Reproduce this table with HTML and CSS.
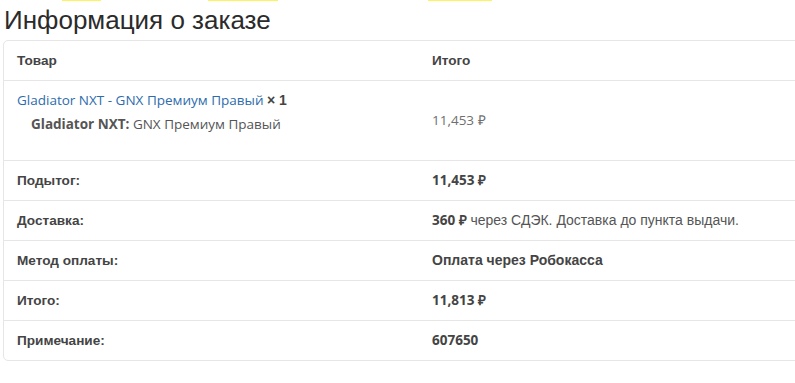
FILE: index.html
```html
<!DOCTYPE html>
<html lang="ru">
<head>
<meta charset="utf-8">
<title>Информация о заказе</title>
<link rel="stylesheet" href="styles.css">
</head>
<body>
<div class="marks">
  <span class="mark m1"></span>
  <span class="mark m2"></span>
  <span class="mark m3"></span>
</div>
<h2 class="title">Информация о заказе</h2>
<table class="order">
  <thead>
    <tr>
      <th class="c1">Товар</th>
      <th class="c2">Итого</th>
    </tr>
  </thead>
  <tbody>
    <tr class="item">
      <td class="c1 item-name">
        <a class="link" href="#">Gladiator NXT - GNX Премиум Правый</a> <strong class="qty">× 1</strong>
        <div class="meta"><strong>Gladiator NXT:</strong> GNX Премиум Правый</div>
      </td>
      <td class="c2 item-total"><span class="amount">11,453&nbsp;₽</span></td>
    </tr>
  </tbody>
  <tfoot>
    <tr>
      <th class="c1">Подытог:</th>
      <td class="c2"><span class="amount b">11,453&nbsp;₽</span></td>
    </tr>
    <tr>
      <th class="c1">Доставка:</th>
      <td class="c2"><span class="amount b">360&nbsp;₽</span> <span class="reg">через СДЭК. Доставка до пункта выдачи.</span></td>
    </tr>
    <tr>
      <th class="c1">Метод оплаты:</th>
      <td class="c2 bold">Оплата через Робокасса</td>
    </tr>
    <tr>
      <th class="c1">Итого:</th>
      <td class="c2"><span class="amount b">11,813&nbsp;₽</span></td>
    </tr>
    <tr>
      <th class="c1">Примечание:</th>
      <td class="c2"><span class="amount b">607650</span></td>
    </tr>
  </tfoot>
</table>
</body>
</html>
```

FILE: styles.css
```css
html, body {
  margin: 0;
  padding: 0;
  background: #fff;
  overflow: hidden;
}
body {
  width: 795px;
  height: 383px;
  font-family: "Liberation Sans", Arial, sans-serif;
  color: #444;
  font-size: 13px;
}
.marks {
  display: flex;
  height: 1px;
}
.mark {
  display: block;
  height: 1px;
  background: #fdf45c;
}
.m1 { margin-left: 62px; width: 39px; }
.m2 { margin-left: 107px; width: 70px; }
.m3 { margin-left: 150px; width: 64px; }
.title {
  margin: 0;
  padding: 4px 0 0 4px;
  height: 35px;
  font-family: "Liberation Sans", Arial, sans-serif;
  font-weight: normal;
  font-size: 26px;
  line-height: 30px;
  color: #2b2b2b;
}
.order {
  margin-left: 3px;
  width: 840px;
  border: 1px solid #e6e6e6;
  border-radius: 5px;
  border-collapse: separate;
  border-spacing: 0;
  table-layout: fixed;
}
.order th, .order td {
  padding: 9px 13px;
  line-height: 21px;
  text-align: left;
  vertical-align: middle;
  border-top: 1px solid #e6e6e6;
  font-size: 13.6px;
}
.order thead th {
  border-top: 0;
}
.order th {
  font-weight: bold;
  color: #444;
}
.c1 { width: 389px; }
.item-name {
  vertical-align: top !important;
  padding-bottom: 25px !important;
  font-family: "Open Sans", sans-serif;
  font-size: 13.5px !important;
}
.link {
  color: #2d6cad;
  text-decoration: none;
}
.qty {
  font-family: "Liberation Sans", Arial, sans-serif;
  font-size: 14px;
  color: #444;
}
.meta {
  margin-top: 3px;
  padding-left: 14px;
  color: #555;
}
.meta strong {
  color: #555;
}
.amount {
  font-family: "Open Sans", sans-serif;
  font-size: 13.5px;
  color: #6f6f6f;
}
.amount.b {
  font-weight: bold;
  color: #444;
}
.reg {
  font-size: 14px;
  color: #555;
}
.bold {
  font-weight: bold;
  color: #444;
  font-size: 14px !important;
}
```
